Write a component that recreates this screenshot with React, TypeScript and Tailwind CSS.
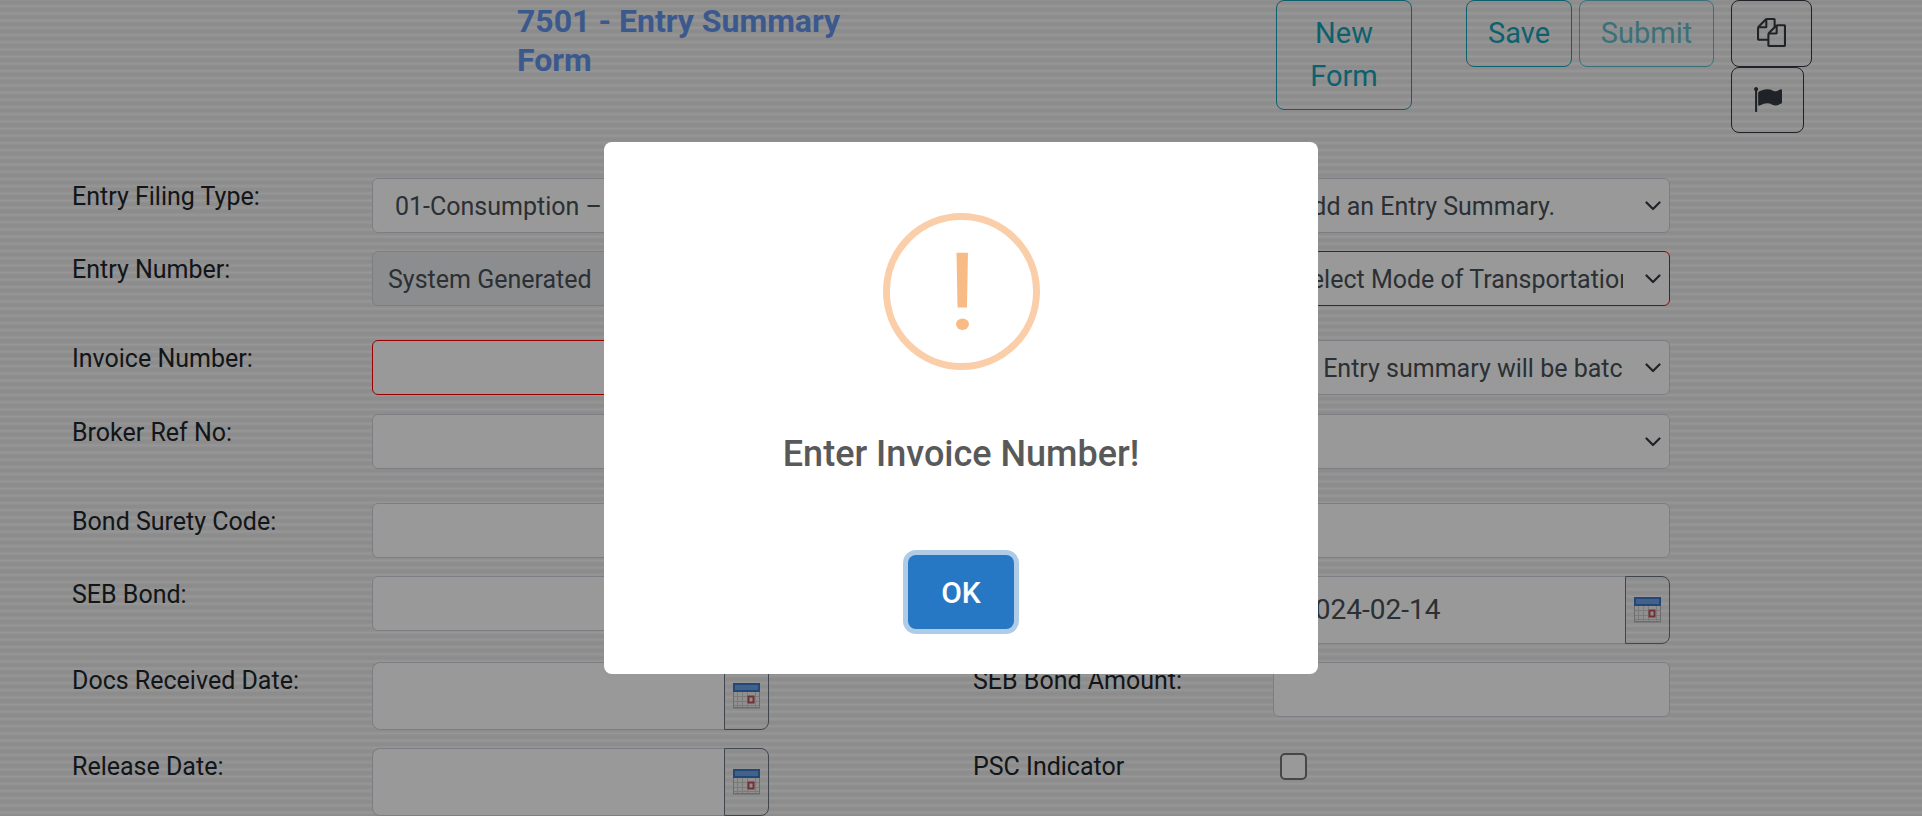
import { useId, type ReactNode } from "react";

const field =
  "h-[55px] w-full rounded-md border px-[15px] pt-[2px] text-[25px] text-[#495057] outline-none";
const plain = "border-[#ced4da] bg-white";
const invalid = "border-[#ff0000] bg-white";
const locked = "border-[#ced4da] bg-[#e9ecef]";

function Row({ label, children }: { label?: string; children: (id: string) => ReactNode }) {
  const id = useId();
  return (
    <div className="flex items-start">
      {label ? (
        <label htmlFor={id} className="w-[300px] shrink-0 text-[25px] leading-[37px] text-[#212529]">
          {label}
        </label>
      ) : (
        <div className="w-[300px] shrink-0" />
      )}
      <div className="min-w-0 flex-1">{children(id)}</div>
    </div>
  );
}

type FieldProps = { id: string; name?: string };

function TextField({ id, name, required, value, disabled }: FieldProps & { required?: boolean; value?: string; disabled?: boolean }) {
  return (
    <input
      id={id}
      type="text"
      aria-label={name}
      defaultValue={value}
      disabled={disabled}
      className={`${field} ${disabled ? locked : required ? invalid : plain}`}
    />
  );
}

function SelectField({ id, name, required, options }: FieldProps & { required?: boolean; options: string[] }) {
  return (
    <div className="grid">
      <select
        id={id}
        aria-label={name}
        className={`${field} col-start-1 row-start-1 appearance-none pr-[46px] pl-[22px] ${required ? invalid : plain}`}
      >
        {options.map((o) => (
          <option key={o}>{o}</option>
        ))}
      </select>
      <svg
        viewBox="0 0 16 10"
        className="pointer-events-none col-start-1 row-start-1 mr-[9px] h-[10px] w-4 self-center justify-self-end"
        fill="none"
        stroke="#343a40"
        strokeWidth="2.2"
        strokeLinecap="round"
        strokeLinejoin="round"
      >
        <path d="M1.5 1.5 8 8l6.500-6.500" />
      </svg>
    </div>
  );
}

function CalendarIcon() {
  return (
    <svg viewBox="0 0 27 26" className="h-[26px] w-[27px]">
      <rect x="0.500" y="8.500" width="26" height="16" fill="#f0f0f0" stroke="#b4b4b4" />
      <path d="M4.500 9v15M9.500 9v15M14.500 9v15M22.500 9v15M1 13.500h25M1 18.500h25M1 22.500h25" stroke="#cdcdcd" fill="none" />
      <rect width="27" height="9" fill="#3a78cc" />
      <rect x="2" y="2" width="23" height="5" fill="#6fa3e4" />
      <rect x="15.500" y="13.500" width="5" height="6" fill="#eee" stroke="#c0505a" strokeWidth="2" />
      <path d="M0 25.500h27" stroke="#cfcfcf" />
    </svg>
  );
}

function DateField({ id, name, value }: FieldProps & { value?: string }) {
  return (
    <div className="flex h-[68px]">
      <input
        id={id}
        type="text"
        aria-label={name}
        defaultValue={value}
        className="min-w-0 flex-1 rounded-l-lg border border-r-0 border-[#ced4da] bg-white px-[25px] text-[28px] text-[#495057] outline-none"
      />
      <button
        type="button"
        aria-label="Open calendar"
        className="flex w-[45px] shrink-0 items-center justify-center rounded-r-lg border border-[#6c757d]"
      >
        <CalendarIcon />
      </button>
    </div>
  );
}

const outline = "rounded-lg border border-[#17a2b8] py-[11px] text-[29px] leading-[43px] text-[#17a2b8]";
const iconButton = "flex items-center justify-center rounded-lg border border-[#343a40]";

export default function App() {
  return (
    <div className="relative h-screen overflow-hidden bg-[repeating-linear-gradient(#f3f3f3_0%,#e9e9e9_5%,#e9e9e9_9%,#f2f2f2_14%,#fcfcfc_17%,#f3f3f3_20%)] bg-[length:100%_36px] font-['Roboto',sans-serif]">
      <header className="flex h-[178px] items-start pr-[110px] pl-[517px]">
        <h1 className="w-[340px] pt-[2px] text-[32px] leading-[39px] font-bold text-[#6495ed]">7501 - Entry Summary Form</h1>
        <button type="button" className={`${outline} ml-auto w-[136px] px-4`}>
          New Form
        </button>
        <button type="button" className={`${outline} ml-[54px] w-[106px]`}>
          Save
        </button>
        <button type="button" disabled className={`${outline} ml-[7px] w-[135px] opacity-65`}>
          Submit
        </button>
        <div className="ml-[17px] flex flex-col items-start">
          <button type="button" aria-label="Copy" className={`${iconButton} h-[67px] w-[81px] pb-[2px]`}>
            <svg viewBox="0 0 1792 1792" className="h-[29px] w-[29px]" fill="#343a40">
              <path d="M1696 384q40 0 68 28t28 68v1216q0 40-28 68t-68 28h-960q-40 0-68-28t-28-68v-288h-544q-40 0-68-28t-28-68v-672q0-40 20-88t48-76l408-408q28-28 76-48t88-20h416q40 0 68 28t28 68v328q68-40 128-40h416zm-544 213l-299 299h299v-299zm-640-384l-299 299h299v-299zm196 647l316-316v-416h-384v416q0 40-28 68t-68 28h-416v640h512v-256q0-40 20-88t48-76zm956 804v-1152h-384v416q0 40-28 68t-68 28h-416v640h896z" />
            </svg>
          </button>
          <button type="button" aria-label="Flag" className={`${iconButton} h-[66px] w-[73px] pb-[2px]`}>
            <svg viewBox="0 0 1792 1792" className="h-[29px] w-[29px]" fill="#343a40">
              <path d="M320 256q0 72-64 110v1266q0 13-9.500 22.500t-22.500 9.500h-64q-13 0-22.500-9.500t-9.500-22.500v-1266q-64-38-64-110 0-53 37.500-90.500t90.500-37.500 90.500 37.500 37.500 90.500zm1472 64v763q0 25-12.500 38.500t-39.500 27.500q-215 116-369 116-61 0-123.500-22t-108.500-48-115.500-48-142.500-22q-192 0-464 146-17 9-33 9-26 0-45-19t-19-45v-742q0-32 31-55 21-14 79-43 236-120 421-120 107 0 200 29t219 88q38 19 88 19 54 0 117.500-21t110-47 88-47 54.500-21q26 0 45 19t19 45z" />
            </svg>
          </button>
        </div>
      </header>

      <form className="grid grid-cols-2 gap-x-[204px] pr-[252px] pl-[72px]">
        <div className="flex flex-col">
          <div className="h-[73px]">
            <Row label="Entry Filing Type:">{(id) => <SelectField id={id} options={["01-Consumption –"]} />}</Row>
          </div>
          <div className="h-[89px]">
            <Row label="Entry Number:">{(id) => <TextField id={id} value="System Generated" disabled />}</Row>
          </div>
          <div className="h-[74px]">
            <Row label="Invoice Number:">{(id) => <TextField id={id} required />}</Row>
          </div>
          <div className="h-[89px]">
            <Row label="Broker Ref No:">{(id) => <TextField id={id} />}</Row>
          </div>
          <div className="h-[73px]">
            <Row label="Bond Surety Code:">{(id) => <TextField id={id} />}</Row>
          </div>
          <div className="h-[86px]">
            <Row label="SEB Bond:">{(id) => <TextField id={id} />}</Row>
          </div>
          <div className="h-[86px]">
            <Row label="Docs Received Date:">{(id) => <DateField id={id} />}</Row>
          </div>
          <Row label="Release Date:">{(id) => <DateField id={id} />}</Row>
        </div>
        <div className="flex flex-col">
          <div className="h-[73px]">
            <Row>{(id) => <SelectField id={id} name="Action" options={["Add an Entry Summary."]} />}</Row>
          </div>
          <div className="h-[89px]">
            <Row>{(id) => <SelectField id={id} name="Mode of Transportation" required options={["Select Mode of Transportation"]} />}</Row>
          </div>
          <div className="h-[74px]">
            <Row>{(id) => <SelectField id={id} name="Payment type" options={["7- Entry summary will be batched"]} />}</Row>
          </div>
          <div className="h-[89px]">
            <Row>{(id) => <SelectField id={id} name="Bond type" options={[""]} />}</Row>
          </div>
          <div className="h-[73px]">
            <Row>{(id) => <TextField id={id} name="Bond amount" />}</Row>
          </div>
          <div className="h-[86px]">
            <Row>{(id) => <DateField id={id} name="Date" value="2024-02-14" />}</Row>
          </div>
          <div className="h-[86px]">
            <Row label="SEB Bond Amount:">{(id) => <TextField id={id} />}</Row>
          </div>
          <Row label="PSC Indicator">
            {(id) => (
              <input id={id} type="checkbox" className="mt-[5px] ml-[7px] block h-[27px] w-[27px] appearance-none rounded-[5px] border-2 border-[#767676] bg-white" />
            )}
          </Row>
        </div>
      </form>

      <div className="absolute inset-0 flex items-center justify-center bg-black/40">
        <div role="alertdialog" aria-labelledby="alert-title" className="flex w-[714px] flex-col items-center rounded-lg bg-white pt-[71px] pb-[45px]">
          <svg viewBox="0 0 158 158" className="h-[157px] w-[157px]">
            <circle cx="79" cy="79" r="75.500" fill="none" stroke="#facea8" strokeWidth="7" />
            <path d="M74 40h11.500l-1 55h-9.500z" fill="#f8bb86" />
            <ellipse cx="80" cy="112" rx="6.500" ry="5.800" fill="#f8bb86" />
          </svg>
          <h2 id="alert-title" className="mt-[60px] text-[36px] leading-[48px] font-medium text-[#595959]">
            Enter Invoice Number!
          </h2>
          <button
            type="button"
            className="mt-[77px] h-[74px] w-[106px] rounded-lg bg-[#2778c4] text-[30px] font-medium text-white shadow-[0_0_0_5px_#b0cbe6]"
          >
            OK
          </button>
        </div>
      </div>
    </div>
  );
}
